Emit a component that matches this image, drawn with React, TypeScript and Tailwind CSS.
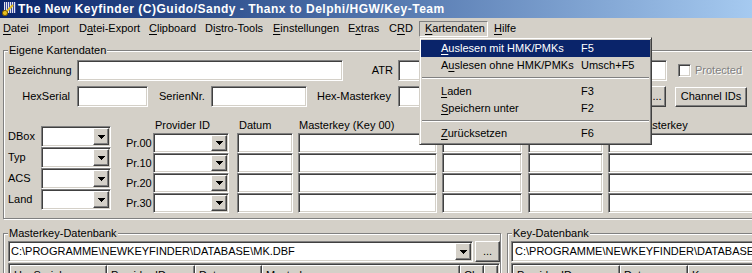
import React from 'react';

const sunken =
  'box-border bg-white border border-t-[#808080] border-l-[#808080] border-r-white border-b-white shadow-[inset_1px_1px_0_#404040,inset_-1px_-1px_0_#d4d0c8]';
const raised =
  'box-border bg-[#d4d0c8] border border-t-white border-l-white border-r-[#404040] border-b-[#404040] shadow-[inset_-1px_-1px_0_#808080]';

function Arrow() {
  return (
    <svg width="7" height="4" viewBox="0 0 7 4" shapeRendering="crispEdges">
      <rect x="0" y="0" width="7" height="1" fill="#000" />
      <rect x="1" y="1" width="5" height="1" fill="#000" />
      <rect x="2" y="2" width="3" height="1" fill="#000" />
      <rect x="3" y="3" width="1" height="1" fill="#000" />
    </svg>
  );
}

function KeyIcon() {
  return (
    <svg width="16" height="16" viewBox="0 0 16 16" className="ml-[1px] shrink-0">
      <rect x="3" y="1" width="12" height="11" fill="#e4e4ec" />
      {[4, 6, 8, 10, 12, 14].map((x) => (
        <rect key={x} x={x} y="1" width="1" height="11" fill="#3a4a9a" />
      ))}
      <path d="M6 10 L12 4" stroke="#e8c020" strokeWidth="2" />
      <circle cx="4" cy="12" r="2.6" fill="#e8c020" stroke="#7a5a00" strokeWidth="1" />
    </svg>
  );
}

function Edit({ className, text }: { className: string; text?: string }) {
  return (
    <div className={`${sunken} ${className} flex items-center overflow-hidden whitespace-nowrap pl-[3px]`}>
      {text}
    </div>
  );
}

function Combo({ className, text }: { className: string; text?: string }) {
  return (
    <div className={`${sunken} ${className} flex p-[1px]`}>
      <div className="flex-1 flex items-center overflow-hidden whitespace-nowrap pl-[1px]">{text}</div>
      <div className={`${raised} w-[16px] flex items-center justify-center`}>
        <Arrow />
      </div>
    </div>
  );
}

function Btn({ className, children }: { className: string; children: React.ReactNode }) {
  return <div className={`${raised} ${className} flex items-center justify-center`}>{children}</div>;
}

function Group({ title, className, children }: { title: string; className: string; children?: React.ReactNode }) {
  return (
    <div className={`relative box-border border border-[#808080] shadow-[1px_1px_0_#fff,inset_1px_1px_0_#fff] ${className}`}>
      <span className="absolute left-[4px] -top-[7px] bg-[#d4d0c8] px-[1px] leading-[13px]">{title}</span>
      {children}
    </div>
  );
}

function U({ children }: { children: React.ReactNode }) {
  return <span className="underline underline-offset-[2px]">{children}</span>;
}

function MenuTop({ className, children, pressed }: { className: string; children: React.ReactNode; pressed?: boolean }) {
  return (
    <div
      className={`box-border h-[16px] border leading-[13px] whitespace-nowrap ${className} ${
        pressed ? 'border-t-[#808080] border-l-[#808080] border-r-white border-b-white' : 'border-transparent'
      }`}
    >
      {children}
    </div>
  );
}

function DropItem({ label, keys, active }: { label: React.ReactNode; keys: string; active?: boolean }) {
  return (
    <div className={`flex items-center h-[17px] pl-[20px] ${active ? 'bg-[#0a246a] text-white' : ''}`}>
      <span className="w-[140px]">{label}</span>
      <span>{keys}</span>
    </div>
  );
}

function GridHead({ className, children }: { className: string; children?: React.ReactNode }) {
  return <div className={`${raised} ${className} h-[17px] pl-[3px] pt-[3px] whitespace-nowrap overflow-hidden`}>{children}</div>;
}

export default function App() {
  const prRows = ['Pr.00', 'Pr.10', 'Pr.20', 'Pr.30'];
  const boxRows = ['DBox', 'Typ', 'ACS', 'Land'];

  return (
    <div className="relative w-[752px] h-[273px] overflow-hidden bg-[#d4d0c8] text-[11px] leading-[13px] text-black font-['Liberation_Sans',Arial,sans-serif]">
      {/* Titelleiste */}
      <div className="h-[18px] flex items-center bg-linear-to-r from-[#0a246a] to-[#a6caf0]">
        <KeyIcon />
        <span className="ml-[1px] text-white font-bold text-[12px] tracking-[0.5px] whitespace-nowrap">
          The New Keyfinder (C)Guido/Sandy - Thanx to Delphi/HGW/Key-Team
        </span>
      </div>

      {/* Menüleiste */}
      <div className="h-[19px] flex items-start pt-[3px]">
        <MenuTop className="w-[32px] pl-[2px]"><U>D</U>atei</MenuTop>
        <MenuTop className="w-[41px] pl-[5px]"><U>I</U>mport</MenuTop>
        <MenuTop className="w-[70px] pl-[5px]">D<U>a</U>tei-Export</MenuTop>
        <MenuTop className="w-[56px] pl-[5px]"><U>C</U>lipboard</MenuTop>
        <MenuTop className="w-[68px] pl-[5px]">Di<U>s</U>tro-Tools</MenuTop>
        <MenuTop className="w-[75px] pl-[5px]"><U>E</U>instellungen</MenuTop>
        <MenuTop className="w-[41px] pl-[5px]">E<U>x</U>tras</MenuTop>
        <MenuTop className="w-[36px] pl-[5px]">C<U>R</U>D</MenuTop>
        <MenuTop className="w-[69px] pl-[5px]" pressed><U>K</U>artendaten</MenuTop>
        <MenuTop className="w-[35px] pl-[5px]"><U>H</U>ilfe</MenuTop>
      </div>

      <div className="w-[760px] pl-[3px]">
        {/* Eigene Kartendaten */}
        <Group title="Eigene Kartendaten" className="mt-[13px] h-[169px] w-[757px]">
          <div className="flex items-center mt-[9px] h-[21px]">
            <span className="w-[73px] pl-[4px]">Bezeichnung</span>
            <Edit className="w-[266px] h-[21px]" />
            <span className="w-[55px] text-right pr-[5px]">ATR</span>
            <Edit className="w-[269px] h-[21px]" />
            <div className={`${sunken} ml-[11px] w-[13px] h-[13px] bg-[#d4d0c8]`} />
            <span className="ml-[4px] text-[#808080] [text-shadow:1px_1px_0_#fff]">Protected</span>
          </div>

          <div className="flex items-center mt-[5px] h-[21px]">
            <span className="w-[73px] text-right pr-[7px]">HexSerial</span>
            <Edit className="w-[71px] h-[21px]" />
            <span className="w-[63px] pl-[11px]">SerienNr.</span>
            <Edit className="w-[96px] h-[21px]" />
            <span className="w-[91px] text-right pr-[7px]">Hex-Masterkey</span>
            <Edit className="w-[248px] h-[21px]" />
            <Btn className="ml-[2px] w-[18px] h-[21px]">...</Btn>
            <Btn className="ml-[9px] w-[72px] h-[20px]">Channel IDs</Btn>
          </div>

          <div className="flex">
            <div className="flex flex-col mt-[19px]">
              {boxRows.map((l) => (
                <div key={l} className="flex items-center h-[21px]">
                  <span className="w-[37px] pl-[4px]">{l}</span>
                  <Combo className="w-[70px] h-[21px]" />
                </div>
              ))}
            </div>

            <div className="flex flex-col mt-[12px]">
              <div className="flex h-[14px] whitespace-nowrap">
                <span className="w-[42px]" />
                <span className="w-[84px] pl-[2px]">Provider ID</span>
                <span className="w-[61px] pl-[2px]">Datum</span>
                <span className="w-[144px] pl-[1px]">Masterkey (Key 00)</span>
                <span className="w-[166px]" />
                <span className="pl-[29px]">Masterkey</span>
              </div>
              {prRows.map((p) => (
                <div key={p} className="flex items-center h-[20px]">
                  <span className="w-[42px] pl-[15px]">{p}</span>
                  <Combo className="w-[76px] h-[20px]" />
                  <Edit className="ml-[8px] w-[56px] h-[20px]" />
                  <Edit className="ml-[5px] w-[139px] h-[20px]" />
                  <Edit className="ml-[5px] w-[80px] h-[20px]" />
                  <Edit className="ml-[6px] w-[75px] h-[20px]" />
                  <Edit className="ml-[5px] w-[150px] h-[20px]" />
                </div>
              ))}
            </div>
          </div>
        </Group>

        {/* Datenbanken */}
        <div className="flex mt-[14px]">
          <Group title="Masterkey-Datenbank" className="w-[500px] h-[60px]">
            <div className="flex mt-[7px] ml-[4px]">
              <Combo className="w-[465px] h-[21px]" text="C:\PROGRAMME\NEWKEYFINDER\DATABASE\MK.DBF" />
              <Btn className="ml-[2px] w-[25px] h-[21px]">...</Btn>
            </div>
            <div className={`${sunken} mt-[1px] ml-[4px] w-[492px] h-[40px] p-[1px] flex items-start`}>
              <GridHead className="w-[97px]">HexSerial</GridHead>
              <GridHead className="w-[88px]">Provider ID</GridHead>
              <GridHead className="w-[67px]">Datum</GridHead>
              <GridHead className="w-[198px]">Masterkey</GridHead>
              <GridHead className="w-[24px]">Ch</GridHead>
              <GridHead className="w-[14px]" />
            </div>
          </Group>

          <Group title="Key-Datenbank" className="ml-[6px] w-[260px] h-[60px]">
            <div className="flex mt-[7px] ml-[3px]">
              <Edit className="w-[250px] h-[21px] pl-[3px]" text="C:\PROGRAMME\NEWKEYFINDER\DATABASE\KEY.DBF" />
            </div>
            <div className={`${sunken} mt-[1px] ml-[3px] w-[250px] h-[40px] p-[1px] flex items-start`}>
              <GridHead className="w-[107px]">Provider ID</GridHead>
              <GridHead className="w-[68px]">Datum</GridHead>
              <GridHead className="w-[70px]">Key</GridHead>
            </div>
          </Group>
        </div>
      </div>

      {/* Aufgeklapptes Menü Kartendaten */}
      <div className="absolute left-[419px] top-[37px] w-[233px] h-[108px] box-border bg-[#d4d0c8] border border-t-[#d4d0c8] border-l-[#d4d0c8] border-r-[#404040] border-b-[#404040] shadow-[inset_1px_1px_0_#fff,inset_-1px_-1px_0_#808080] px-[1px] pt-[2px] whitespace-nowrap">
        <DropItem active label={<><U>A</U>uslesen mit HMK/PMKs</>} keys="F5" />
        <DropItem label={<>A<U>u</U>slesen ohne HMK/PMKs</>} keys="Umsch+F5" />
        <div className="h-[9px] pt-[3px] mx-[1px]">
          <div className="border-t border-t-[#808080] border-b border-b-white" />
        </div>
        <DropItem label={<><U>L</U>aden</>} keys="F3" />
        <DropItem label={<><U>S</U>peichern unter</>} keys="F2" />
        <div className="h-[8px] pt-[3px] mx-[1px]">
          <div className="border-t border-t-[#808080] border-b border-b-white" />
        </div>
        <DropItem label={<><U>Z</U>urücksetzen</>} keys="F6" />
      </div>
    </div>
  );
}
